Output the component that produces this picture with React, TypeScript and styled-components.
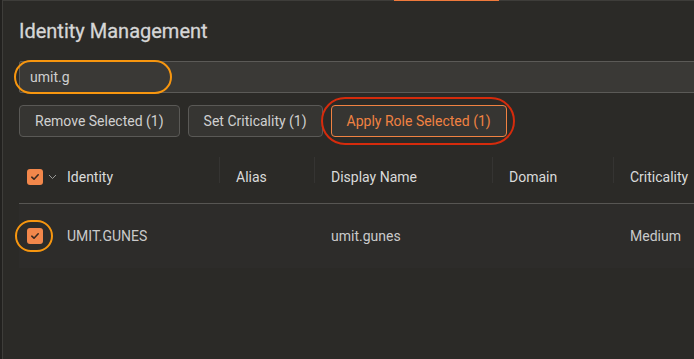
import React from "react";
import styled, { createGlobalStyle } from "styled-components";

const Global = createGlobalStyle`
  html, body { margin: 0; padding: 0; background: #2b2a27; }
  body { font-family: Roboto, "Noto Sans", "Liberation Sans", sans-serif; color: #d4d4d4; overflow: hidden; }
`;

const Shell = styled.div`
  width: 694px;
  height: 359px;
  background: #22211f;
  padding-left: 2px;
  box-sizing: border-box;
  overflow: hidden;
`;

const Panel = styled.div`
  position: relative;
  height: 100%;
  background: #2b2a27;
  border-left: 1px solid #3e3d3a;
  border-top: 1px solid #3e3d3a;
  box-sizing: border-box;
  padding: 16px 0 0 16px;
  display: flex;
  flex-direction: column;
`;

const ActiveTab = styled.div`
  position: absolute;
  top: -1px;
  left: 391px;
  width: 105px;
  height: 1px;
  background: #f07a3c;
`;

const Title = styled.h1`
  margin: 0;
  font-size: 20px;
  line-height: 28px;
  font-weight: 400;
  color: #d6d6d6;
  -webkit-text-stroke: 0.3px #d6d6d6;
`;

const SearchWrap = styled.div`
  position: relative;
  margin-top: 16px;
  margin-right: -20px;
`;

const SearchInput = styled.input`
  display: block;
  width: 100%;
  height: 32px;
  box-sizing: border-box;
  background: #3a3936;
  border: 1px solid #5b5a57;
  border-radius: 2px;
  padding: 0 10px;
  font-family: inherit;
  font-size: 14px;
  color: #cfcfcf;
  outline: none;
`;

const Ring = styled.div<{ $c: string; $w: number; $h: number; $x: number; $y: number; $r: number }>`
  position: absolute;
  left: ${(p) => p.$x}px;
  top: ${(p) => p.$y}px;
  width: ${(p) => p.$w}px;
  height: ${(p) => p.$h}px;
  border: 2px solid ${(p) => p.$c};
  border-radius: ${(p) => p.$r}px;
  box-sizing: border-box;
  pointer-events: none;
`;

const Toolbar = styled.div`
  display: flex;
  gap: 8px;
  margin-top: 12px;
`;

const BtnWrap = styled.div`
  position: relative;
`;

const Button = styled.button<{ $accent?: boolean }>`
  height: 32px;
  padding: 0 15px;
  background: #363532;
  border: 1px solid ${(p) => (p.$accent ? "#f08242" : "#5a5956")};
  border-radius: 4px;
  color: ${(p) => (p.$accent ? "#f08242" : "#d0d0d0")};
  font-family: inherit;
  font-size: 14px;
  white-space: nowrap;
`;

const Table = styled.div`
  margin-top: 13px;
  margin-right: -200px;
`;

const Cols = "40px 160px 95px 178px 121px 140px";

const HeaderRow = styled.div`
  display: grid;
  grid-template-columns: ${Cols};
  height: 53px;
  align-items: center;
  border-bottom: 1px solid #575653;
`;

const BodyRow = styled.div`
  display: grid;
  grid-template-columns: ${Cols};
  height: 64px;
  align-items: center;
  background: #2d2c2a;
`;

const HCell = styled.div<{ $sep?: boolean; $pad?: number }>`
  position: relative;
  padding-left: ${(p) => p.$pad ?? 17}px;
  font-size: 14px;
  color: #dadada;
  white-space: nowrap;
  &::before {
    content: "";
    display: ${(p) => (p.$sep ? "block" : "none")};
    position: absolute;
    left: 0;
    top: -12px;
    width: 1px;
    height: 26px;
    background: #353432;
  }
`;

const Cell = styled.div<{ $pad?: number }>`
  padding-left: ${(p) => p.$pad ?? 17}px;
  font-size: 14px;
  color: #cacaca;
  white-space: nowrap;
`;

const CheckCell = styled.div`
  position: relative;
  display: flex;
  align-items: center;
  padding-left: 8px;
  gap: 5px;
`;

const Box = styled.span`
  width: 16px;
  height: 16px;
  border-radius: 3px;
  background: #f2874b;
  display: flex;
  align-items: center;
  justify-content: center;
`;

const Check = () => (
  <svg width="10" height="10" viewBox="0 0 10 10">
    <path d="M1.8 5.2 L4 7.2 L8.2 2.8" fill="none" stroke="#3b2a20" strokeWidth="1.6" strokeLinecap="round" strokeLinejoin="round" />
  </svg>
);

const Chevron = () => (
  <svg width="9" height="6" viewBox="0 0 9 6">
    <path d="M1 1 L4.5 4.5 L8 1" fill="none" stroke="#9a9a98" strokeWidth="1" />
  </svg>
);

export default function App() {
  return (
    <>
      <Global />
      <Shell>
        <Panel>
          <ActiveTab />
          <Title>Identity Management</Title>
          <SearchWrap>
            <SearchInput defaultValue="umit.g" />
            <Ring $c="#f7960f" $x={-5} $y={-1} $w={158} $h={34} $r={17} />
          </SearchWrap>
          <Toolbar>
            <Button>Remove Selected (1)</Button>
            <Button>Set Criticality (1)</Button>
            <BtnWrap>
              <Button $accent>Apply Role Selected (1)</Button>
              <Ring $c="#d62b0c" $x={-10} $y={-8} $w={194} $h={48} $r={24} />
            </BtnWrap>
          </Toolbar>
          <Table>
            <HeaderRow>
              <CheckCell>
                <Box><Check /></Box>
                <Chevron />
              </CheckCell>
              <HCell $pad={8}>Identity</HCell>
              <HCell $sep>Alias</HCell>
              <HCell $sep>Display Name</HCell>
              <HCell $sep>Domain</HCell>
              <HCell $sep>Criticality</HCell>
            </HeaderRow>
            <BodyRow>
              <CheckCell>
                <Box><Check /></Box>
                <Ring $c="#f7960f" $x={-4} $y={-8} $w={38} $h={32} $r={16} />
              </CheckCell>
              <Cell $pad={8}>UMIT.GUNES</Cell>
              <Cell></Cell>
              <Cell>umit.gunes</Cell>
              <Cell></Cell>
              <Cell>Medium</Cell>
            </BodyRow>
          </Table>
        </Panel>
      </Shell>
    </>
  );
}
